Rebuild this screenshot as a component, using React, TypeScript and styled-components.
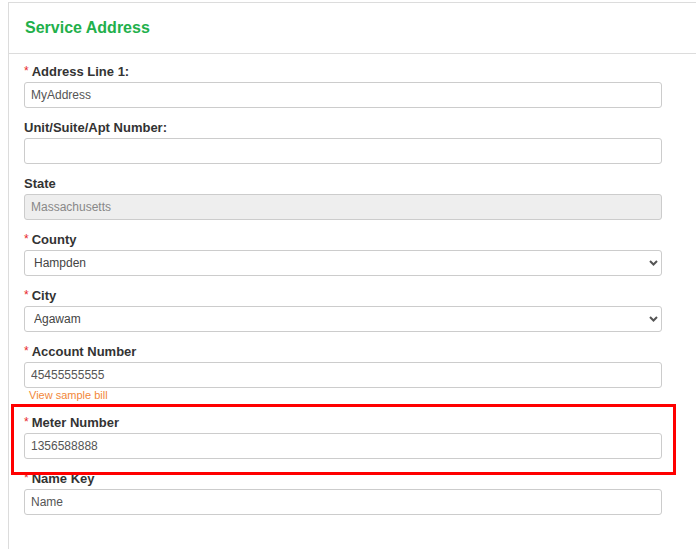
import React from "react";
import styled, { createGlobalStyle } from "styled-components";

const GlobalStyle = createGlobalStyle`
  html, body {
    margin: 0;
    padding: 0;
    background: #fff;
    overflow: hidden;
  }
  body {
    font-family: "Liberation Sans", Arial, sans-serif;
  }
`;

const Page = styled.div`
  padding: 2px 0 0 8px;
  height: 549px;
  box-sizing: border-box;
`;

const Panel = styled.section`
  width: 720px;
  min-height: 560px;
  border: 1px solid #dcdcdc;
  border-right: none;
  box-sizing: border-box;
  background: #fff;
`;

const PanelHeader = styled.header`
  height: 50px;
  display: flex;
  align-items: center;
  padding: 0 16px;
  border-bottom: 1px solid #dcdcdc;
`;

const Title = styled.h3`
  margin: 0;
  font-size: 16px;
  font-weight: bold;
  color: #22b04b;
  line-height: 20px;
`;

const PanelBody = styled.div`
  padding: 8px 0 0 15px;
  display: flex;
  flex-direction: column;
  gap: 10px;
`;

const Field = styled.div`
  position: relative;
  width: 638px;
  display: flex;
  flex-direction: column;
`;

const Highlight = styled.div`
  position: absolute;
  top: -9px;
  bottom: -16px;
  left: -13px;
  right: -14px;
  border: 3px solid #ff0000;
  pointer-events: none;
  z-index: 2;
`;

const Label = styled.label`
  display: block;
  height: 18px;
  line-height: 18px;
  padding-top: 1px;
  margin-bottom: 1px;
  font-size: 13px;
  font-weight: bold;
  color: #333;
`;

const Star = styled.span`
  color: #e8272a;
  font-weight: normal;
  font-size: 12px;
  margin-right: 3px;
  position: relative;
  top: -1px;
`;

const TextInput = styled.input<{ $disabled?: boolean }>`
  display: block;
  width: 100%;
  height: 26px;
  box-sizing: border-box;
  padding: 0 6px;
  border: 1px solid #ccc;
  border-radius: 3px;
  font-family: "Liberation Sans", Arial, sans-serif;
  font-size: 12px;
  color: ${(p) => (p.$disabled ? "#888" : "#555")};
  background: ${(p) => (p.$disabled ? "#eee" : "#fff")};
  outline: none;
`;

const SelectWrap = styled.div`
  position: relative;
  width: 100%;
`;

const Select = styled.select`
  display: block;
  width: 100%;
  height: 26px;
  box-sizing: border-box;
  padding: 0 24px 0 9px;
  border: 1px solid #ccc;
  border-radius: 3px;
  font-family: "Liberation Sans", Arial, sans-serif;
  font-size: 12px;
  color: #444;
  background: #fff;
  appearance: none;
  -webkit-appearance: none;
  outline: none;
`;

const Chevron = styled.svg`
  position: absolute;
  right: 4px;
  top: 10px;
  width: 9px;
  height: 6px;
  pointer-events: none;
`;

const SampleLink = styled.a`
  display: block;
  height: 15px;
  line-height: 15px;
  padding-left: 5px;
  font-size: 11px;
  color: #f2873a;
  text-decoration: none;
`;

type FieldDef = {
  label: string;
  required?: boolean;
  value: string;
  kind?: "input" | "select" | "disabled";
  link?: string;
  highlight?: boolean;
};

const fields: FieldDef[] = [
  { label: "Address Line 1:", required: true, value: "MyAddress" },
  { label: "Unit/Suite/Apt Number:", value: "" },
  { label: "State", value: "Massachusetts", kind: "disabled" },
  { label: "County", required: true, value: "Hampden", kind: "select" },
  { label: "City", required: true, value: "Agawam", kind: "select" },
  { label: "Account Number", required: true, value: "45455555555", link: "View sample bill" },
  { label: "Meter Number", required: true, value: "1356588888", highlight: true },
  { label: "Name Key", required: true, value: "Name" },
];

export default function App() {
  return (
    <>
      <GlobalStyle />
      <Page>
        <Panel>
          <PanelHeader>
            <Title>Service Address</Title>
          </PanelHeader>
          <PanelBody>
            {fields.map((f) => (
              <Field key={f.label}>
                {f.highlight && <Highlight />}
                <Label>
                  {f.required && <Star>*</Star>}
                  {f.label}
                </Label>
                {f.kind === "select" ? (
                  <SelectWrap>
                    <Select defaultValue={f.value}>
                      <option value={f.value}>{f.value}</option>
                    </Select>
                    <Chevron viewBox="0 0 9 6">
                      <path d="M1 1 L4.5 4.5 L8 1" fill="none" stroke="#555" strokeWidth="2" />
                    </Chevron>
                  </SelectWrap>
                ) : (
                  <TextInput
                    readOnly
                    value={f.value}
                    $disabled={f.kind === "disabled"}
                    disabled={f.kind === "disabled"}
                  />
                )}
                {f.link && <SampleLink href="#">{f.link}</SampleLink>}
              </Field>
            ))}
          </PanelBody>
        </Panel>
      </Page>
    </>
  );
}
